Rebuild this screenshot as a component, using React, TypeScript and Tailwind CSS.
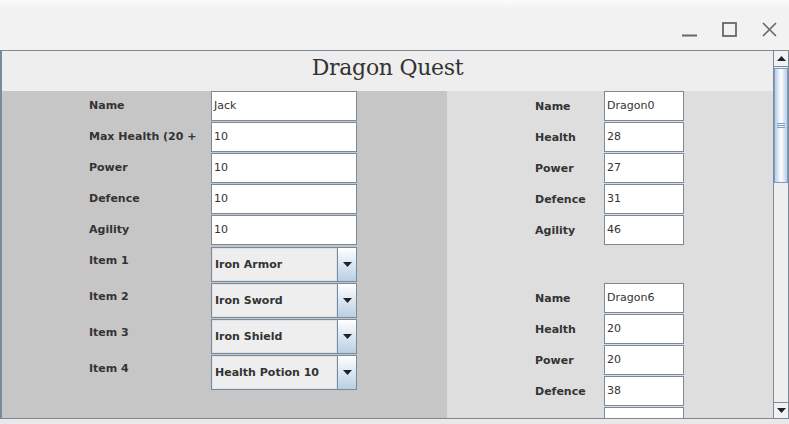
const leftRows = [
  { label: 'Name', value: 'Jack' },
  { label: 'Max Health (20 +', value: '10' },
  { label: 'Power', value: '10' },
  { label: 'Defence', value: '10' },
  { label: 'Agility', value: '10' },
];

const items = ['Iron Armor', 'Iron Sword', 'Iron Shield', 'Health Potion 10'];

const dragons = [
  [
    { label: 'Name', value: 'Dragon0' },
    { label: 'Health', value: '28' },
    { label: 'Power', value: '27' },
    { label: 'Defence', value: '31' },
    { label: 'Agility', value: '46' },
  ],
  [
    { label: 'Name', value: 'Dragon6' },
    { label: 'Health', value: '20' },
    { label: 'Power', value: '20' },
    { label: 'Defence', value: '38' },
    { label: 'Agility', value: '' },
  ],
];

function Arrow({ up }: { up?: boolean }) {
  return (
    <svg width="9" height="5" viewBox="0 0 9 5">
      <path d={up ? 'M0 5 L4.5 0 L9 5 Z' : 'M0 0 L9 0 L4.5 5 Z'} fill="#222" />
    </svg>
  );
}

function TextField({ value, w }: { value: string; w: string }) {
  return (
    <div className={`${w} h-[30px] bg-white border border-[#7a8a99] flex items-center pl-[2px] pt-[1px] text-[11px] text-[#333]`}>
      {value}
    </div>
  );
}

function Combo({ value }: { value: string }) {
  return (
    <div className="w-[146px] h-[35px] flex border border-[#7a8a99] bg-[#eeeeee]">
      <div className="flex-1 flex items-center pl-[2px] pt-[1px] border border-[#dbe3ec] font-bold text-[11px] text-[#333]">
        {value}
      </div>
      <div className="w-[19px] flex items-center justify-center border-l border-[#7a8a99] bg-gradient-to-b from-[#ffffff] to-[#b8cfe5]">
        <Arrow />
      </div>
    </div>
  );
}

export default function App() {
  return (
    <div className="w-[789px] h-[424px] overflow-hidden flex flex-col bg-[#f2f2f2] font-['DejaVu_Sans',sans-serif]">
      {/* title bar */}
      <div className="h-[50px] bg-gradient-to-b from-[#fbfbfb] to-[#f2f2f2] to-[20%] flex items-end justify-end pb-[13px] pr-[12px] gap-[25px]">
        <svg width="15" height="15" viewBox="0 0 15 15">
          <path d="M0 13.5 H15" stroke="#666" strokeWidth="2" />
        </svg>
        <svg width="15" height="15" viewBox="0 0 15 15">
          <rect x="1" y="1" width="13" height="13" fill="none" stroke="#666" strokeWidth="1.8" />
        </svg>
        <svg width="15" height="15" viewBox="0 0 15 15">
          <path d="M1 1 L14 14 M14 1 L1 14" stroke="#666" strokeWidth="1.6" />
        </svg>
      </div>

      {/* frame */}
      <div className="h-[369px] flex border-t border-b border-l-2 border-[#7a8a99]">
        <div className="flex-1 flex flex-col">
          <div className="h-[40px] bg-[#eeeeee] flex items-center justify-center font-['DejaVu_Serif',serif] text-[22px] tracking-[-0.3px] text-[#333] pb-[7px]">
            Dragon Quest
          </div>
          <div className="flex-1 flex overflow-hidden">
            {/* hero */}
            <div className="w-[445px] bg-[#c6c6c6] pl-[87px] flex flex-col gap-[2px]">
              <div className="grid grid-cols-[122px_146px] gap-y-[1px]">
                {leftRows.map((r) => (
                  <div key={r.label} className="contents">
                    <div className="pt-[7px] font-bold text-[11px] text-[#333] whitespace-nowrap overflow-hidden">{r.label}</div>
                    <TextField value={r.value} w="w-[146px]" />
                  </div>
                ))}
              </div>
              <div className="grid grid-cols-[122px_146px] gap-y-[1px]">
                {items.map((it, i) => (
                  <div key={it} className="contents">
                    <div className="pt-[6px] font-bold text-[11px] text-[#333]">Item {i + 1}</div>
                    <Combo value={it} />
                  </div>
                ))}
              </div>
            </div>
            {/* dragons */}
            <div className="flex-1 bg-[#dedede] pl-[88px] flex flex-col gap-[38px]">
              {dragons.map((d, di) => (
                <div key={di} className="grid grid-cols-[69px_80px] gap-y-[1px]">
                  {d.map((r) => (
                    <div key={r.label} className="contents">
                      <div className="flex items-center pt-[3px] font-bold text-[11px] text-[#333]">{r.label}</div>
                      <TextField value={r.value} w="w-[80px]" />
                    </div>
                  ))}
                </div>
              ))}
            </div>
          </div>
        </div>

        {/* scrollbar */}
        <div className="w-[16px] flex flex-col border-l border-r border-[#7a8a99] bg-[#eeeeee]">
          <div className="h-[16px] border-b border-[#7a8a99] flex items-center justify-center bg-[#f2f2f2]">
            <Arrow up />
          </div>
          <div className="mt-[1px] h-[115px] border border-[#7c9ccb] bg-gradient-to-r from-[#b8cfe5] via-[#ffffff] to-[#b8cfe5] flex flex-col items-center justify-center gap-[1px]">
            <div className="w-[8px] h-[1px] bg-[#7c9ccb]" />
            <div className="w-[8px] h-[1px] bg-[#7c9ccb]" />
            <div className="w-[8px] h-[1px] bg-[#7c9ccb]" />
          </div>
          <div className="flex-1" />
          <div className="h-[16px] border-t border-[#7a8a99] flex items-center justify-center bg-[#f2f2f2]">
            <Arrow />
          </div>
        </div>
      </div>
      <div className="flex-1 bg-[#e9e9e9]" />
    </div>
  );
}
